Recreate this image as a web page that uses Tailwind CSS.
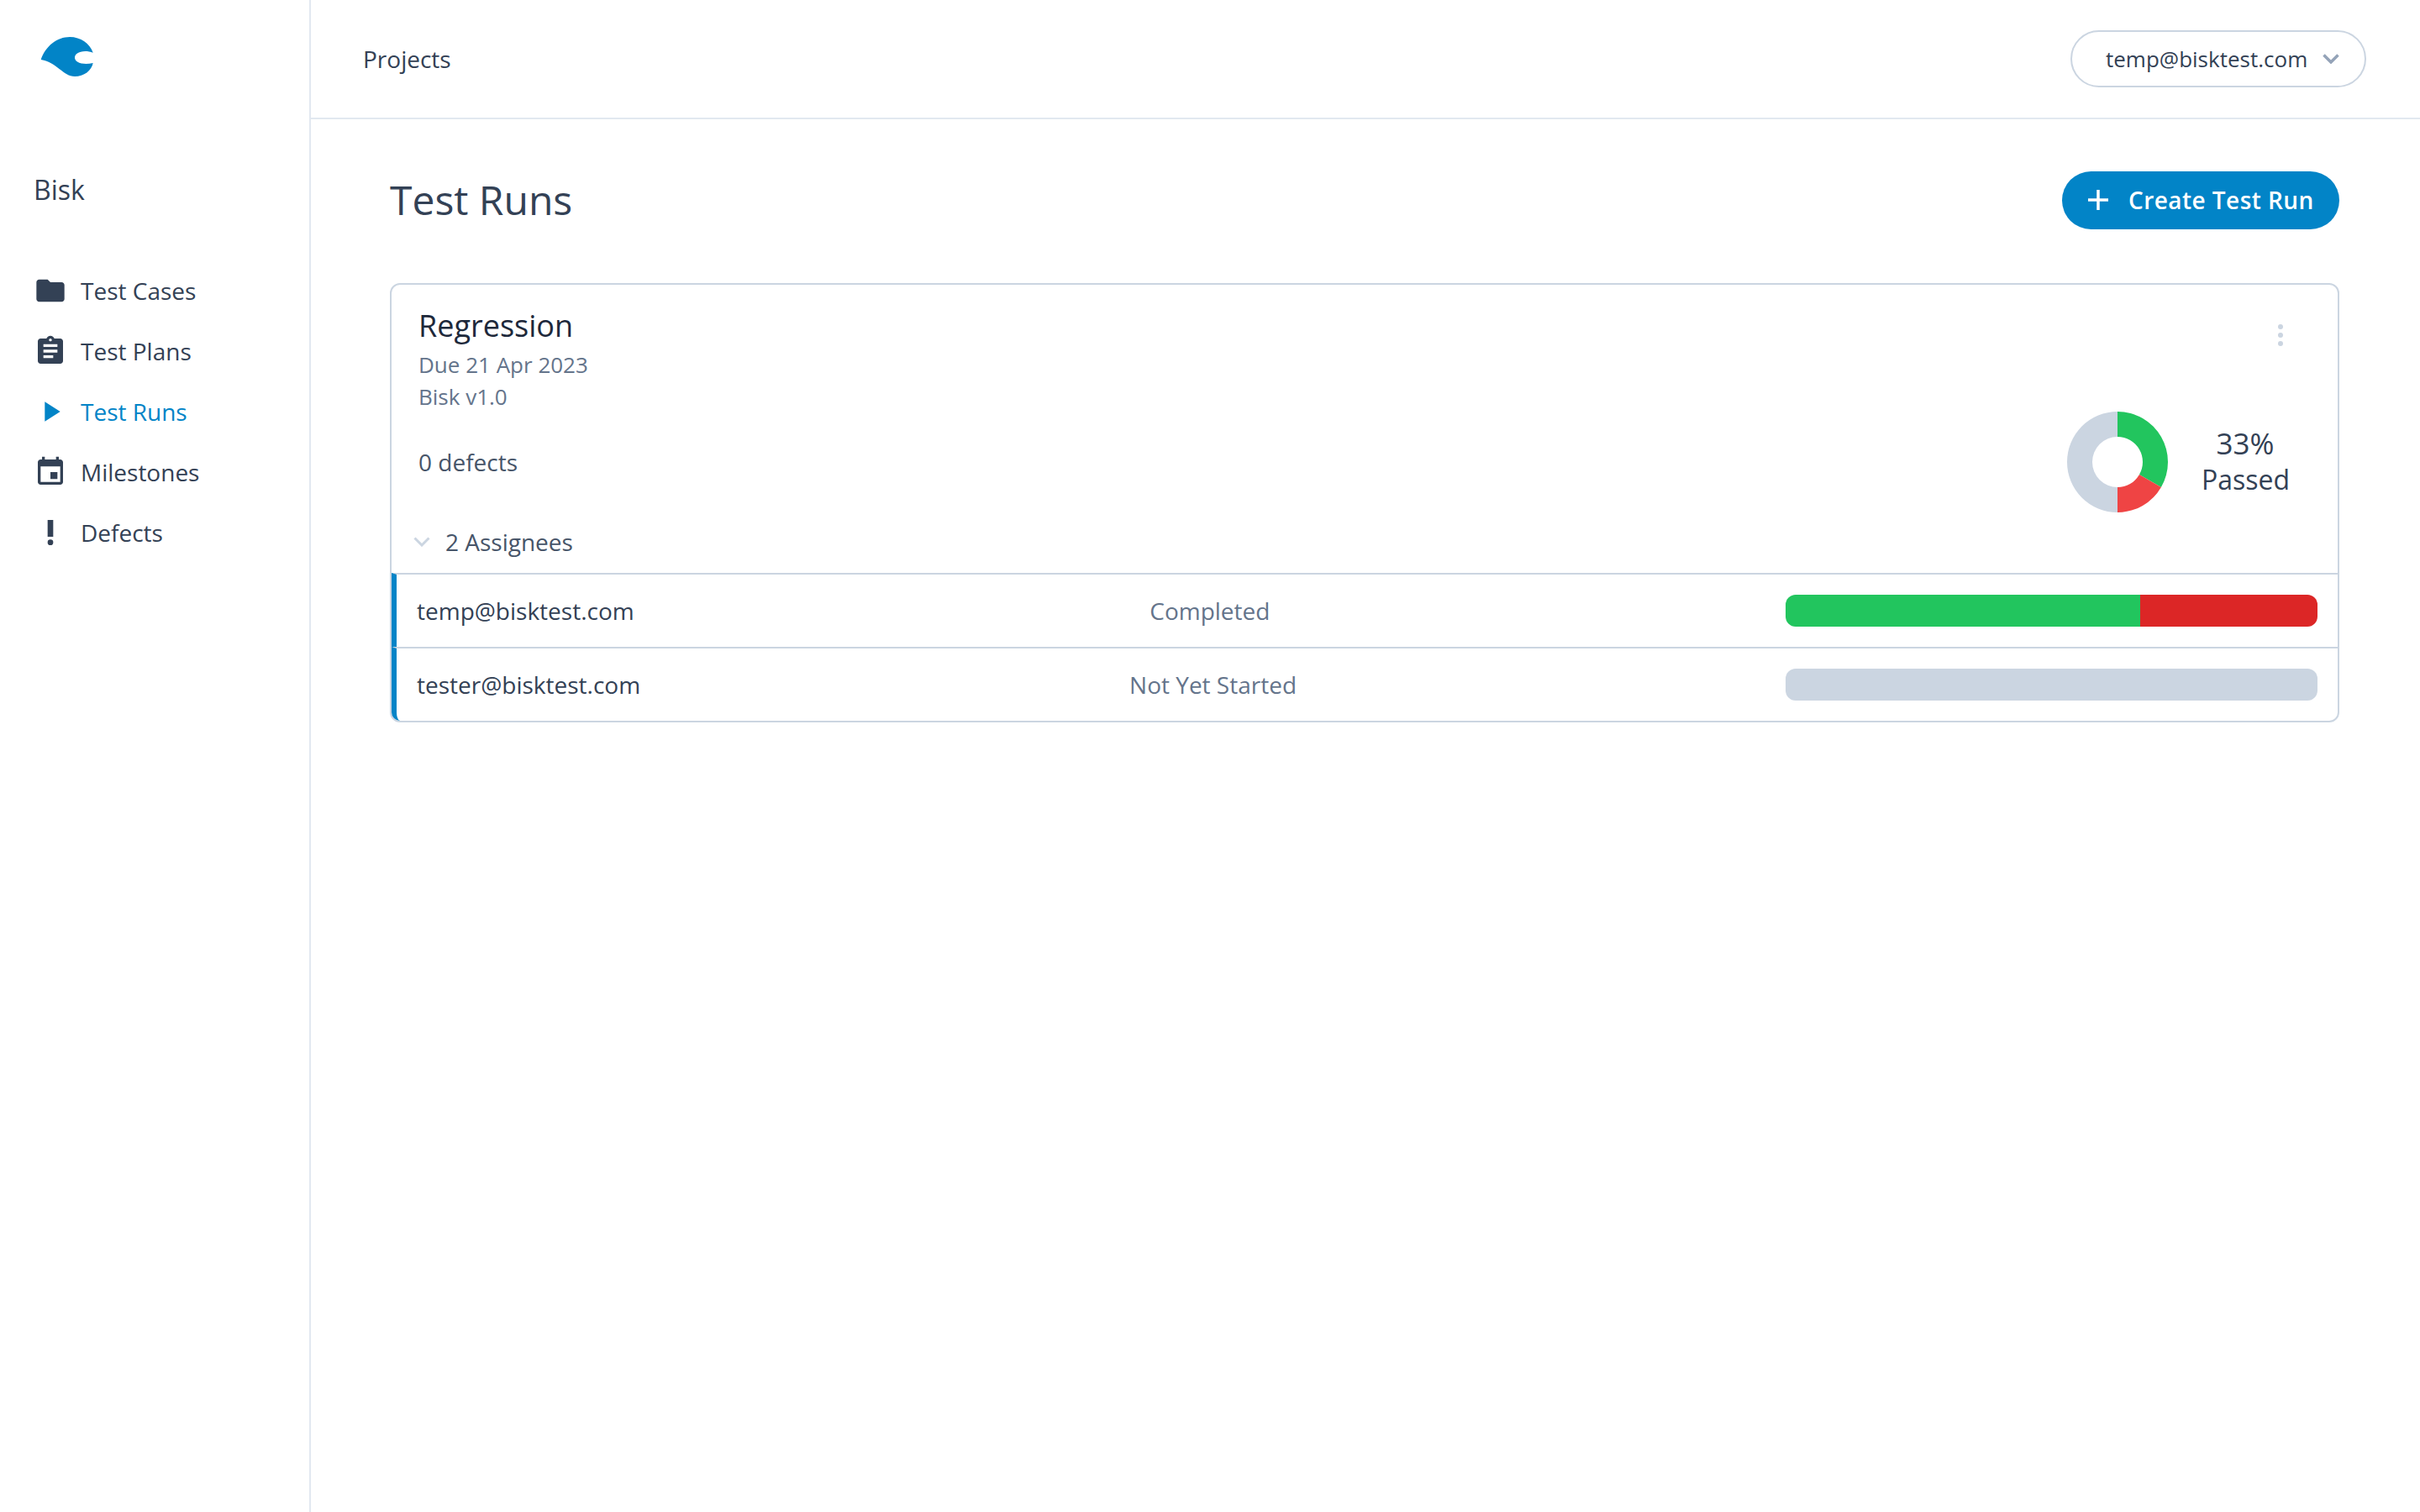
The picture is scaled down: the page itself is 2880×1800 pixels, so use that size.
<!DOCTYPE html>
<html lang="en">
<head>
    <meta charset="UTF-8">
    <script src="https://cdn.jsdelivr.net/npm/@tailwindcss/browser@4"></script>
    <title>Bisk - Test Runs</title>
</head>
<body class="bg-white font-['Open_Sans',sans-serif] text-[#334155]">
    <div class="flex h-[1800px] w-[2880px] overflow-hidden">
        <!-- sidebar -->
        <aside class="w-[370px] h-full shrink-0 border-r-2 border-[#e2e8f0]">
            <div class="pl-[48px] pt-[44px]">
                <svg class="w-[64px] h-[48px] block" viewBox="0 0 64 48" fill="#0284c7"><path d="M0.7 27C6 11 20 0 35 0C48 0 59 8 62.7 18.7C56 16 48 16.5 44 19.5C40 22 40 27 44 29.5C49 32.5 56 32.5 62.7 31C61 40 52 47 41 47C27 47 20 30 0.7 27Z"/></svg>
            </div>
            <div class="pl-[40px] mt-[112px] text-[32px] font-medium leading-[44px]">Bisk</div>
            <nav class="mt-[62px] flex flex-col text-[28px]">
                <a class="flex items-center gap-[16px] pl-[40px] h-[72px]">
                    <svg class="w-[40px] h-[40px]" viewBox="0 0 24 24" fill="currentColor"><path d="M10 4H4c-1.1 0-1.99.9-1.99 2L2 18c0 1.1.9 2 2 2h16c1.1 0 2-.9 2-2V8c0-1.1-.9-2-2-2h-8l-2-2z"/></svg>
                    Test Cases
                </a>
                <a class="flex items-center gap-[16px] pl-[40px] h-[72px]">
                    <svg class="w-[40px] h-[40px]" viewBox="0 0 24 24" fill="currentColor"><path d="M19 3h-4.18C14.4 1.84 13.3 1 12 1c-1.3 0-2.4.84-2.82 2H5c-1.1 0-2 .9-2 2v14c0 1.1.9 2 2 2h14c1.1 0 2-.9 2-2V5c0-1.1-.9-2-2-2zm-7 0c.55 0 1 .45 1 1s-.45 1-1 1-1-.45-1-1 .45-1 1-1zm2 14H7v-2h7v2zm3-4H7v-2h10v2zm0-4H7V7h10v2z"/></svg>
                    Test Plans
                </a>
                <a class="flex items-center gap-[16px] pl-[40px] h-[72px] text-[#0284c7]">
                    <svg class="w-[40px] h-[40px]" viewBox="0 0 24 24" fill="currentColor"><path d="M8 5v14l11-7z"/></svg>
                    Test Runs
                </a>
                <a class="flex items-center gap-[16px] pl-[40px] h-[72px]">
                    <svg class="w-[40px] h-[40px]" viewBox="0 0 24 24" fill="currentColor"><path d="M17 12h-5v5h5v-5zM16 1v2H8V1H6v2H5c-1.11 0-1.99.9-1.99 2L3 19c0 1.1.89 2 2 2h14c1.1 0 2-.9 2-2V5c0-1.1-.9-2-2-2h-1V1h-2zm3 18H5V8h14v11z"/></svg>
                    Milestones
                </a>
                <a class="flex items-center gap-[16px] pl-[40px] h-[72px]">
                    <svg class="w-[40px] h-[40px]" viewBox="0 0 24 24" fill="currentColor"><circle cx="12" cy="19" r="2"/><path d="M10 3h4v12h-4z"/></svg>
                    Defects
                </a>
            </nav>
        </aside>

        <div class="flex-1 min-w-0">
            <!-- top bar -->
            <header class="h-[142px] border-b-2 border-[#e2e8f0] flex items-center justify-between pl-[62px] pr-[64px]">
                <div class="text-[28px] font-medium">Projects</div>
                <button class="h-[68px] w-[352px] flex items-center rounded-full border-2 border-[#cbd5e1] pl-[40px] text-[26px]">
                    temp@bisktest.com
                    <svg class="w-[20px] h-[12px] ml-[18px]" viewBox="0 0 20 12" fill="none" stroke="#94a3b8" stroke-width="3.5"><path d="M1.5 1.5L10 10L18.5 1.5"/></svg>
                </button>
            </header>

            <main class="pl-[94px] pr-[96px]">
                <div class="flex items-center justify-between h-[195px] pb-[3px]">
                    <h1 class="text-[48px] leading-[64px]">Test Runs</h1>
                    <button class="h-[69px] w-[330px] flex items-center rounded-full bg-[#0284c7] text-white text-[28px] tracking-[0.45px] font-semibold pl-[30px]">
                        <svg class="w-[26px] h-[26px] mr-[23px]" viewBox="0 0 26 26" fill="none" stroke="currentColor" stroke-width="3.5"><path d="M13 1v24M1 13h24"/></svg>
                        Create Test Run
                    </button>
                </div>

                <section class="border-2 border-[#cbd5e1] rounded-[12px]">
                    <div class="flex justify-between pl-[32px] pr-[65px] pt-[22px]">
                        <div>
                            <div class="text-[36px] leading-[54px] text-[#1e293b]">Regression</div>
                            <div class="text-[26px] leading-[38px] text-[#64748b]">Due 21 Apr 2023</div>
                            <div class="text-[26px] leading-[38px] text-[#64748b]">Bisk v1.0</div>
                        </div>
                        <div class="flex flex-col gap-[4px] mt-[25px]">
                            <span class="w-[6px] h-[6px] rounded-full bg-[#cbd5e1]"></span>
                            <span class="w-[6px] h-[6px] rounded-full bg-[#cbd5e1]"></span>
                            <span class="w-[6px] h-[6px] rounded-full bg-[#cbd5e1]"></span>
                        </div>
                    </div>
                    <div class="flex items-center justify-between pl-[32px] pr-[58px] mt-[-2px]">
                        <div class="text-[28px] text-[#475569] mt-[1px]">0 defects</div>
                        <div class="flex items-center gap-[40px]">
                            <svg class="w-[120px] h-[120px] mt-[1px]" viewBox="0 0 120 120">
                                <path fill="#22c55e" d="M60 0A60 60 0 0 1 111.96 90L85.98 75A30 30 0 0 0 60 30Z"/>
                                <path fill="#ef4444" d="M111.96 90A60 60 0 0 1 60 120L60 90A30 30 0 0 0 85.98 75Z"/>
                                <path fill="#cbd5e1" d="M60 120A60 60 0 0 1 60 0L60 30A30 30 0 0 0 60 90Z"/>
                            </svg>
                            <div class="text-[32px] leading-[42px] text-center w-[104px]"><span class="text-[35px]">33%</span><br>Passed</div>
                        </div>
                    </div>
                    <div class="flex items-center h-[38px] mt-[16px] mb-[18px] pl-[26px] text-[28px] text-[#475569]">
                        <svg class="w-[20px] h-[12px] mr-[18px]" viewBox="0 0 20 12" fill="none" stroke="#cbd5e1" stroke-width="3"><path d="M1.5 1.5L10 10L18.5 1.5"/></svg>
                        2 Assignees
                    </div>
                    <div class="flex items-center justify-between h-[88px] border-t-2 border-[#cbd5e1] border-l-[6px] border-l-[#0284c7] pl-[24px] pr-[24px] text-[28px]">
                        <div>temp@bisktest.com</div>
                        <div class="text-[#64748b]">Completed</div>
                        <div class="w-[633px] h-[38px] rounded-[12px] overflow-hidden flex">
                            <div class="w-2/3 bg-[#22c55e]"></div>
                            <div class="w-1/3 bg-[#dc2626]"></div>
                        </div>
                    </div>
                    <div class="flex items-center justify-between h-[88px] border-t-2 border-[#cbd5e1] border-l-[6px] border-l-[#0284c7] rounded-bl-[10px] pl-[24px] pr-[24px] text-[28px]">
                        <div>tester@bisktest.com</div>
                        <div class="text-[#64748b]">Not Yet Started</div>
                        <div class="w-[633px] h-[38px] rounded-[12px] bg-[#cbd5e1]"></div>
                    </div>
                </section>
            </main>
        </div>
    </div>
</body>
</html>
